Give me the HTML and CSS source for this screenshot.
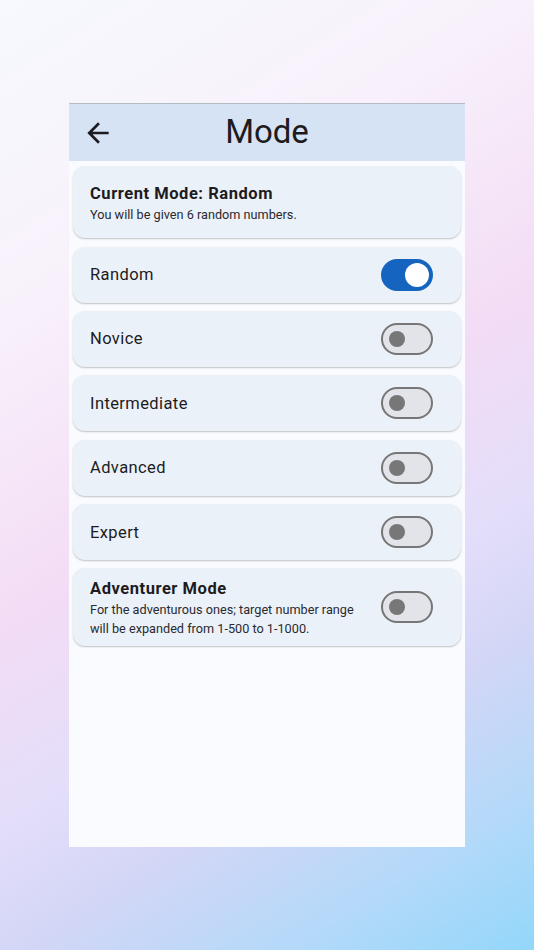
FILE: index.html
```html
<!DOCTYPE html>
<html lang="en">

<head>
    <meta charset="UTF-8">
    <meta name="viewport" content="width=device-width, initial-scale=1.0">
    <title>Mode</title>
    <link rel="stylesheet" href="styles.css">
</head>

<body>
    <div class="phone">
        <div class="app-bar">
            <div class="back-button">
                <svg viewBox="0 0 24 24">
                    <path d="M20 11H7.83l5.59-5.59L12 4l-8 8 8 8 1.41-1.41L7.83 13H20v-2z" fill="#1d1b20"/>
                </svg>
            </div>
            <div class="title">Mode</div>
        </div>

        <div class="content">
            <div class="card info-card">
                <div class="card-title">Current Mode: Random</div>
                <div class="card-subtitle">You will be given 6 random numbers.</div>
            </div>

            <div class="card mode-row">
                <div class="label">Random</div>
                <div class="switch on"><span class="thumb"></span></div>
            </div>
            <div class="card mode-row">
                <div class="label">Novice</div>
                <div class="switch"><span class="thumb"></span></div>
            </div>
            <div class="card mode-row">
                <div class="label">Intermediate</div>
                <div class="switch"><span class="thumb"></span></div>
            </div>
            <div class="card mode-row">
                <div class="label">Advanced</div>
                <div class="switch"><span class="thumb"></span></div>
            </div>
            <div class="card mode-row">
                <div class="label">Expert</div>
                <div class="switch"><span class="thumb"></span></div>
            </div>

            <div class="card mode-row tall">
                <div class="text">
                    <div class="card-title">Adventurer Mode</div>
                    <div class="card-subtitle">For the adventurous ones; target number range will be expanded from 1-500 to 1-1000.</div>
                </div>
                <div class="switch"><span class="thumb"></span></div>
            </div>
        </div>
    </div>
</body>

</html>
```

FILE: styles.css
```css
html, body {
    height: 100%;
}

body {
    margin: 0;
    font-family: 'Roboto', 'Noto Sans', sans-serif;
    color: #1d1b20;
    background: linear-gradient(148deg,
        #f6f9fe 0%,
        #f8f1fb 25%,
        #f3dcf5 49%,
        #e4defa 64%,
        #d3d6f6 75%,
        #b4d9f9 88%,
        #93d7fa 100%);
    overflow: hidden;
}

.phone {
    width: 396px;
    height: 744px;
    margin: 103px 0 0 69px;
    background-color: #f9fbfe;
    display: flex;
    flex-direction: column;
}

.app-bar {
    height: 57px;
    border-top: 1px solid #b6bcc6;
    background-color: #d6e3f4;
    display: flex;
    align-items: center;
    position: relative;
}

.back-button {
    width: 32px;
    height: 32px;
    margin-left: 13px;
    display: flex;
}

.back-button svg {
    width: 32px;
    height: 32px;
}

.title {
    position: absolute;
    left: 0;
    right: 0;
    top: 8px;
    text-align: center;
    font-size: 33px;
    pointer-events: none;
}

.content {
    padding: 1px 4px;
    display: flex;
    flex-direction: column;
}

.card {
    background-color: #ebf1f9;
    border-radius: 12px;
    margin: 4.2px 0;
    box-shadow: 0 1px 2px rgba(0, 0, 0, 0.18), 0 1px 1px rgba(0, 0, 0, 0.06);
}

.info-card {
    height: 72px;
    padding: 2px 17px 0;
    box-sizing: border-box;
    display: flex;
    flex-direction: column;
    justify-content: center;
}

.card-title {
    font-size: 16.5px;
    font-weight: bold;
    letter-spacing: 0.55px;
    line-height: 22px;
}

.card-subtitle {
    font-size: 12.7px;
    line-height: 19px;
    letter-spacing: 0;
    color: #2a2a2e;
}

.mode-row {
    height: 56px;
    padding: 0 28px 0 17px;
    display: flex;
    align-items: center;
    justify-content: space-between;
}

.mode-row.tall {
    height: 78px;
}

.mode-row .text {
    width: 275px;
    padding-top: 2px;
}

.label {
    font-size: 16.5px;
    letter-spacing: 0.4px;
}

.switch {
    width: 52px;
    height: 32px;
    box-sizing: border-box;
    border: 2px solid #767676;
    border-radius: 16px;
    background-color: #e2e4ea;
    position: relative;
    flex-shrink: 0;
}

.switch .thumb {
    position: absolute;
    left: 6px;
    top: 6px;
    width: 16px;
    height: 16px;
    border-radius: 50%;
    background-color: #777;
}

.switch.on {
    background-color: #1565c0;
    border-color: #1565c0;
}

.switch.on .thumb {
    left: 22px;
    top: 2px;
    width: 24px;
    height: 24px;
    background-color: #fff;
}
```
